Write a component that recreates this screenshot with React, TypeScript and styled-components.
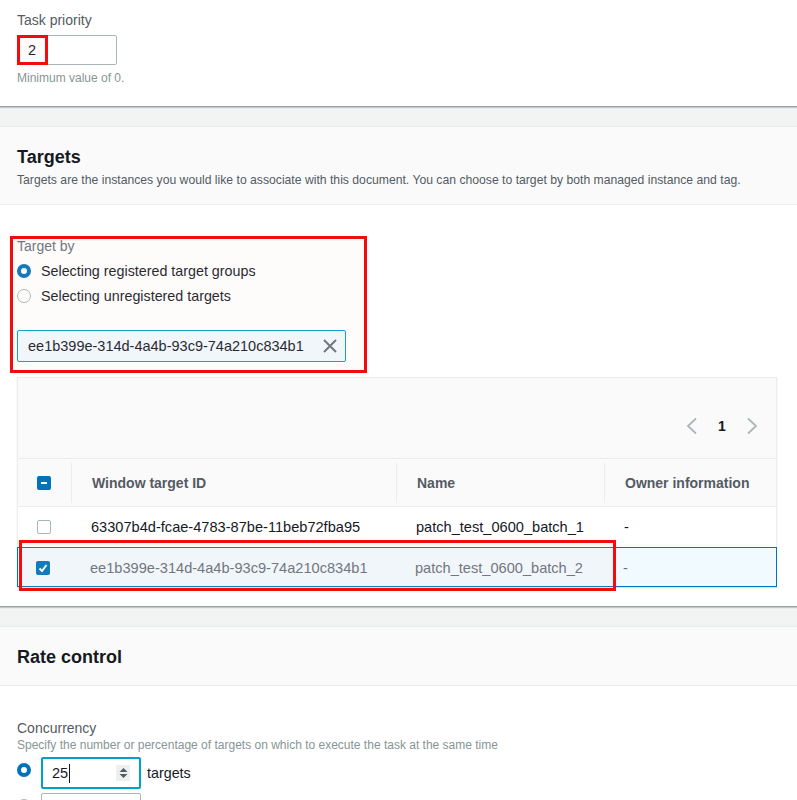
import styled, { createGlobalStyle } from "styled-components";

const GlobalStyle = createGlobalStyle`
  html, body {
    margin: 0;
    padding: 0;
    background: #f2f3f3;
    overflow: hidden;
  }
  body {
    font-family: "Liberation Sans", Arial, sans-serif;
    color: #16191f;
    -webkit-font-smoothing: antialiased;
  }
`;

const Page = styled.div`
  width: 797px;
  display: flex;
  flex-direction: column;
  gap: 20px;
`;

const Card = styled.section<{ $cut?: boolean }>`
  background: #fff;
  border-top: ${(p) => (p.$cut ? "none" : "1px solid #eaeded")};
  box-shadow: 0 1px 0 0 #9ba4a5, 0 2px 1px 0 rgba(0, 28, 36, 0.2);
`;

const CardHeader = styled.header`
  background: #fafafa;
  border-bottom: 1px solid #eaeded;
  padding: 19px 17px 17px;
`;

const CardTitle = styled.h2`
  margin: 0;
  font-size: 18px;
  line-height: 22px;
  font-weight: 700;
  color: #16191f;
`;

const CardDesc = styled.p`
  margin: 4px 0 -1px;
  font-size: 12.2px;
  line-height: 16px;
  color: #545b64;
`;

const CardBody = styled.div<{ $top: number; $bottom: number }>`
  padding: ${(p) => p.$top}px 20px ${(p) => p.$bottom}px 17px;
`;

const Label = styled.div<{ $muted?: boolean }>`
  font-size: 14px;
  line-height: 20px;
  color: ${(p) => (p.$muted ? "#687078" : "#545b64")};
`;

const Hint = styled.div`
  font-size: 12px;
  line-height: 16px;
  color: #879596;
`;

const NumberBox = styled.div<{ $focus?: boolean }>`
  position: relative;
  box-sizing: border-box;
  width: 100px;
  height: ${(p) => (p.$focus ? 32 : 30)}px;
  border: ${(p) => (p.$focus ? "2px solid #00a1c9" : "1px solid #aab7b8")};
  border-radius: 2px;
  background: #fff;
  display: flex;
  align-items: center;
  padding: 0 9px 0 ${(p) => (p.$focus ? 9 : 10)}px;
  font-size: 14.5px;
  color: #16191f;
`;

const PriorityField = styled.div`
  display: flex;
  flex-direction: column;
  gap: 4px;

  ${Label} {
    line-height: 22px;
  }
  ${Hint} {
    margin-top: 1px;
  }
`;

const Highlight = styled.div<{ $w: number; $h: number; $x: number; $y: number }>`
  position: absolute;
  left: ${(p) => p.$x}px;
  top: ${(p) => p.$y}px;
  width: ${(p) => p.$w}px;
  height: ${(p) => p.$h}px;
  box-sizing: border-box;
  border: 3px solid #f20c0c;
  background: rgba(240, 200, 210, 0.08);
  pointer-events: none;
`;

const TargetField = styled.div`
  position: relative;
  display: flex;
  flex-direction: column;
  width: 329px;

  ${Label} {
    line-height: 18px;
  }
`;

const RadioList = styled.div`
  margin-top: 3px;
  display: flex;
  flex-direction: column;
`;

const RadioRow = styled.label`
  display: flex;
  align-items: center;
  gap: 10px;
  height: 25px;
  font-size: 14.3px;
  color: #16191f;
`;

const Radio = styled.span<{ $checked?: boolean }>`
  box-sizing: border-box;
  width: 14px;
  height: 14px;
  border-radius: 50%;
  flex-shrink: 0;
  background: #fff;
  border: ${(p) => (p.$checked ? "4.5px solid #0073bb" : "1px solid #aab7b8")};
`;

const Token = styled.div`
  margin-top: 22px;
  box-sizing: border-box;
  height: 32px;
  background: #f1faff;
  border: 1px solid #00a1c9;
  border-radius: 2px;
  display: flex;
  align-items: center;
  justify-content: space-between;
  padding: 0 7px 0 10px;
  font-size: 14.5px;
  color: #16191f;

  svg {
    display: block;
  }
`;

const Table = styled.div`
  margin-top: 15px;
  border: 1px solid #eaeded;
  background: #fff;
  box-shadow: 0 1px 1px 0 rgba(0, 28, 36, 0.12);
`;

const TableTools = styled.div`
  height: 81px;
  background: #fafafa;
  border-bottom: 1px solid #eaeded;
  box-sizing: border-box;
  display: flex;
  justify-content: flex-end;
  align-items: flex-end;
  padding: 0 18px 21px;
`;

const Pager = styled.div`
  display: flex;
  align-items: center;
  height: 22px;

  svg {
    display: block;
  }
`;

const PageNum = styled.span`
  font-size: 14px;
  font-weight: 700;
  width: 48px;
  text-align: center;
  color: #16191f;
`;

const Grid = styled.div<{ $head?: boolean; $selected?: boolean }>`
  position: relative;
  display: grid;
  grid-template-columns: 53px 325px 208px 1fr;
  align-items: center;
  height: ${(p) => (p.$head ? 48 : 40)}px;
  box-sizing: border-box;
  background: ${(p) => (p.$head ? "#fafafa" : p.$selected ? "#f1faff" : "#fff")};
  border-bottom: ${(p) => (p.$head ? "1px solid #eaeded" : "none")};
  border-top: ${(p) => (p.$selected ? "1px solid #0073bb" : "none")};
  box-shadow: ${(p) =>
    p.$selected ? "inset 1px 0 0 #0073bb, inset -1px 0 0 #0073bb, inset 0 -1px 0 #0073bb" : "none"};
  margin: ${(p) => (p.$selected ? "0 -1px -1px" : "0")};
`;

const Cell = styled.div<{ $head?: boolean; $tone?: string }>`
  position: relative;
  padding-left: ${(p) => (p.$head ? 21 : 20)}px;
  font-size: ${(p) => (p.$head ? 14 : 14.6)}px;
  font-weight: ${(p) => (p.$head ? 700 : 400)};
  color: ${(p) => p.$tone || (p.$head ? "#545b64" : "#16191f")};
  white-space: nowrap;

  ${(p) =>
    p.$head
      ? `&::before {
          content: "";
          position: absolute;
          left: 0;
          top: -12px;
          bottom: -12px;
          width: 1px;
          background: #eaeded;
        }`
      : ""}
`;

const CheckCell = styled.div`
  padding-left: 19px;
  display: flex;
  align-items: center;
`;

const Box = styled.span<{ $on?: boolean }>`
  box-sizing: border-box;
  width: 14px;
  height: 14px;
  border-radius: 2px;
  display: flex;
  align-items: center;
  justify-content: center;
  background: ${(p) => (p.$on ? "#0073bb" : "#fff")};
  border: ${(p) => (p.$on ? "none" : "1px solid #aab7b8")};

  svg {
    display: block;
  }
`;

const ConcurrencyField = styled.div`
  display: flex;
  flex-direction: column;

  ${Hint} {
    margin-top: -1px;
  }
`;

const ChoiceRow = styled.div`
  display: flex;
  align-items: flex-start;
  gap: 10px;
  margin-top: 4px;

  ${Radio} {
    margin-top: 6px;
  }
`;

const Unit = styled.span`
  align-self: center;
  margin-left: -4px;
  font-size: 14.3px;
  color: #16191f;
`;

const Caret = styled.span`
  display: inline-block;
  width: 1px;
  height: 19px;
  background: #16191f;
  margin-left: 1px;
`;

const Spinner = styled.span`
  margin-left: auto;
  width: 14px;
  height: 16px;
  background: #eef0f0;
  display: flex;
  align-items: center;
  justify-content: center;

  svg {
    display: block;
  }
`;

type BoxState = "on" | "off" | "mixed";

function Check({ state }: { state: BoxState }) {
  return (
    <Box $on={state !== "off"}>
      {state === "on" && (
        <svg width="10" height="10" viewBox="0 0 10 10">
          <polyline points="1.5,5.5 4,8 8.5,2" fill="none" stroke="#fff" strokeWidth="2" />
        </svg>
      )}
      {state === "mixed" && (
        <svg width="10" height="10" viewBox="0 0 10 10">
          <line x1="2" y1="5" x2="8" y2="5" stroke="#fff" strokeWidth="2" />
        </svg>
      )}
    </Box>
  );
}

const rows = [
  { id: "63307b4d-fcae-4783-87be-11beb72fba95", name: "patch_test_0600_batch_1", owner: "-", selected: false },
  { id: "ee1b399e-314d-4a4b-93c9-74a210c834b1", name: "patch_test_0600_batch_2", owner: "-", selected: true },
];

export default function App() {
  return (
    <>
      <GlobalStyle />
      <Page>
        <Card $cut>
          <CardBody $top={9} $bottom={20}>
            <PriorityField>
              <Label>Task priority</Label>
              <NumberBox>
                2
                <Highlight $x={-1} $y={-1} $w={31} $h={30} />
              </NumberBox>
              <Hint>Minimum value of 0.</Hint>
            </PriorityField>
          </CardBody>
        </Card>

        <Card>
          <CardHeader>
            <CardTitle>Targets</CardTitle>
            <CardDesc>
              Targets are the instances you would like to associate with this document. You can choose to target by
              both managed instance and tag.
            </CardDesc>
          </CardHeader>
          <CardBody $top={32} $bottom={19}>
            <TargetField>
              <Label $muted>Target by</Label>
              <RadioList>
                <RadioRow>
                  <Radio $checked />
                  Selecting registered target groups
                </RadioRow>
                <RadioRow>
                  <Radio />
                  Selecting unregistered targets
                </RadioRow>
              </RadioList>
              <Token>
                ee1b399e-314d-4a4b-93c9-74a210c834b1
                <svg width="16" height="16" viewBox="0 0 16 16">
                  <path d="M2 2 L14 14 M14 2 L2 14" stroke="#687078" strokeWidth="2" fill="none" />
                </svg>
              </Token>
              <Highlight $x={-7} $y={-1} $w={357} $h={137} />
            </TargetField>

            <Table>
              <TableTools>
                <Pager>
                  <svg width="12" height="18" viewBox="0 0 12 18">
                    <polyline points="10,1.5 2,9 10,16.5" fill="none" stroke="#aab7b8" strokeWidth="1.8" />
                  </svg>
                  <PageNum>1</PageNum>
                  <svg width="12" height="18" viewBox="0 0 12 18">
                    <polyline points="2,1.5 10,9 2,16.5" fill="none" stroke="#aab7b8" strokeWidth="1.8" />
                  </svg>
                </Pager>
              </TableTools>
              <Grid $head>
                <CheckCell>
                  <Check state="mixed" />
                </CheckCell>
                <Cell $head>Window target ID</Cell>
                <Cell $head>Name</Cell>
                <Cell $head>Owner information</Cell>
              </Grid>
              {rows.map((r) => (
                <Grid key={r.id} $selected={r.selected}>
                  <CheckCell>
                    <Check state={r.selected ? "on" : "off"} />
                  </CheckCell>
                  <Cell $tone={r.selected ? "#687078" : undefined}>{r.id}</Cell>
                  <Cell $tone={r.selected ? "#687078" : undefined}>{r.name}</Cell>
                  <Cell $tone={r.selected ? "#687078" : undefined}>{r.owner}</Cell>
                  {r.selected && <Highlight $x={2} $y={-8} $w={597} $h={51} />}
                </Grid>
              ))}
            </Table>
          </CardBody>
        </Card>

        <Card>
          <CardHeader>
            <CardTitle>Rate control</CardTitle>
          </CardHeader>
          <CardBody $top={32} $bottom={20}>
            <ConcurrencyField>
              <Label>Concurrency</Label>
              <Hint>Specify the number or percentage of targets on which to execute the task at the same time</Hint>
              <ChoiceRow>
                <Radio $checked />
                <NumberBox $focus>
                  25
                  <Caret />
                  <Spinner>
                    <svg width="9" height="12" viewBox="0 0 9 12">
                      <polygon points="4.5,1 8.5,5 0.5,5" fill="#545b64" />
                      <polygon points="0.5,7 8.5,7 4.5,11" fill="#545b64" />
                    </svg>
                  </Spinner>
                </NumberBox>
                <Unit>targets</Unit>
              </ChoiceRow>
              <ChoiceRow>
                <Radio />
                <NumberBox />
              </ChoiceRow>
            </ConcurrencyField>
          </CardBody>
        </Card>
      </Page>
    </>
  );
}
